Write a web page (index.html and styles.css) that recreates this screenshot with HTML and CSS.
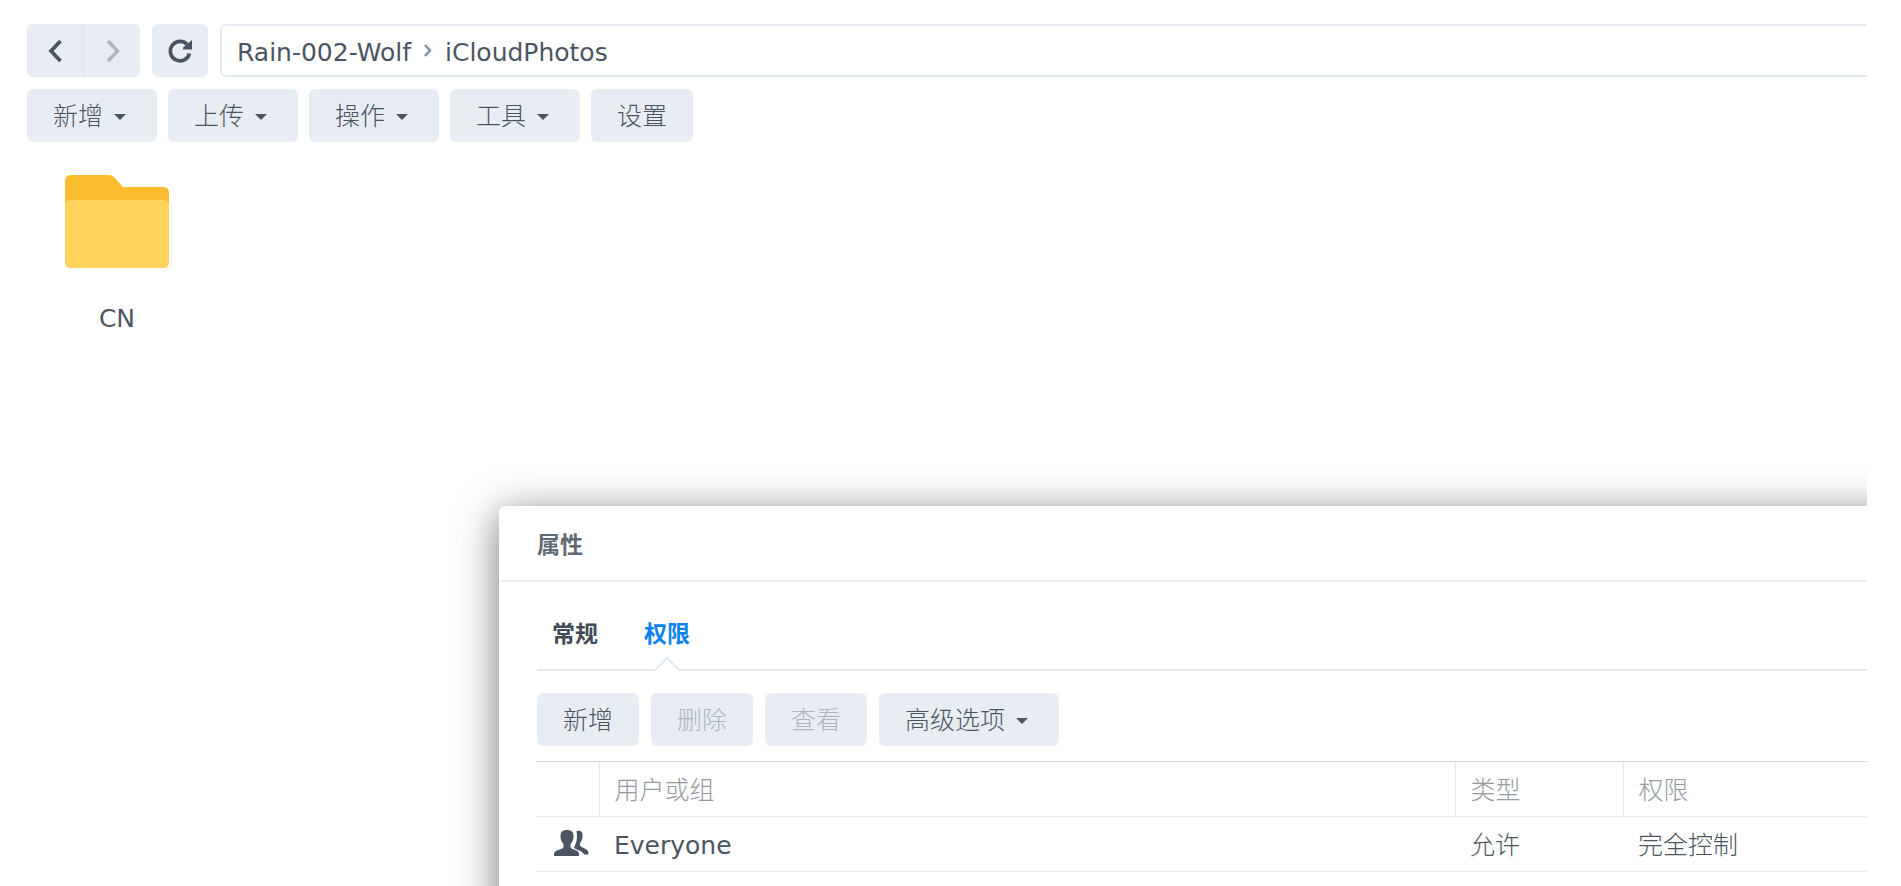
FILE: index.html
```html
<!DOCTYPE html>
<html lang="zh-CN">
<head>
<meta charset="utf-8">
<title>iCloudPhotos</title>
<link rel="stylesheet" href="styles.css">
</head>
<body>
<main class="station">
  <nav class="navbar" aria-label="导航">
    <div class="history">
      <button class="btn nav-btn" type="button" aria-label="后退">
        <svg width="24" height="26" viewBox="0 0 24 26"><path d="M17.500 3 8 13 17.500 23" fill="none" stroke="currentColor" stroke-width="3.800"/></svg>
      </button>
      <button class="btn nav-btn" type="button" aria-label="前进" disabled>
        <svg width="24" height="26" viewBox="0 0 24 26"><path d="M8 3 17.500 13 8 23" fill="none" stroke="currentColor" stroke-width="3.400"/></svg>
      </button>
    </div>
    <button class="btn nav-btn" type="button" aria-label="刷新">
      <svg width="24" height="24" viewBox="0 0 24 24"><path d="M21.500 14.500A9.700 9.700 0 1 1 19 5.300" fill="none" stroke="currentColor" stroke-width="3.700"/><path d="M24 1v9.500H15V8.500z" fill="currentColor"/></svg>
    </button>
    <div class="path">
      <a href="#">Rain-002-Wolf</a>
      <svg class="crumb" width="8" height="14" viewBox="0 0 8 14"><path d="M1 1l5 5.500L1 12" fill="none" stroke="currentColor" stroke-width="2.500"/></svg>
      <a href="#">iCloudPhotos</a>
    </div>
  </nav>

  <div class="toolbar">
    <button class="btn menu" type="button">新增</button>
    <button class="btn menu" type="button">上传</button>
    <button class="btn menu" type="button">操作</button>
    <button class="btn menu" type="button">工具</button>
    <button class="btn" type="button">设置</button>
  </div>

  <section class="files">
    <a class="file" href="#">
      <svg width="104" height="93" viewBox="0 0 104 93">
        <path d="M0 30V6Q0 0 6 0H44Q47 0 49 2L58 12H98Q104 12 104 18V30z" fill="#fcbc30"/>
        <path d="M0 31Q0 25 6 25H98Q104 25 104 31V87Q104 93 98 93H6Q0 93 0 87z" fill="#ffd25c"/>
      </svg>
      <span>CN</span>
    </a>
  </section>

  <section class="dialog" role="dialog" aria-labelledby="dialog-title">
    <h1 class="dialog-title" id="dialog-title">属性</h1>
    <div class="dialog-body">
      <div class="tabs" role="tablist">
        <button class="tab" type="button" role="tab">常规</button>
        <button class="tab active" type="button" role="tab" aria-selected="true">权限
          <svg class="notch" width="26" height="14" viewBox="0 0 26 14"><path d="M1 14V12.500L13 1 25 12.500V14z" fill="#fff"/><path d="M0 13H1L13 1 25 13H26" fill="none" stroke="#e1e9f0" stroke-width="2"/></svg>
        </button>
      </div>
      <div class="actions">
        <button class="btn" type="button">新增</button>
        <button class="btn" type="button" disabled>删除</button>
        <button class="btn" type="button" disabled>查看</button>
        <button class="btn menu" type="button">高级选项</button>
      </div>
      <table class="grid">
        <colgroup><col class="col-icon"><col><col class="col-type"><col class="col-perm"></colgroup>
        <thead>
          <tr><th></th><th>用户或组</th><th>类型</th><th>权限</th></tr>
        </thead>
        <tbody>
          <tr>
            <td class="who"><svg width="35" height="26" viewBox="0 0 35 26" fill="currentColor"><path d="M13 0C17.500 0 19.500 2 19.500 6 19.500 10 18.500 12 16.500 14V17C16.500 20 25 19 25 24V26H0V24C0 19 9.500 20 9.500 17V14C7.500 12 6.500 10 6.500 6 6.500 2 8.500 0 13 0z"/><path d="M22.500 1C27 0 29 2 28.500 6 28.500 9 27.500 11 26 13V15C26 18 34.500 18 34.500 23V24.500H30C28 20 22 20.500 20 17.500 23 12 23.500 8 22.500 1z"/></svg></td>
            <td class="latin">Everyone</td><td>允许</td><td>完全控制</td>
          </tr>
        </tbody>
      </table>
    </div>
  </section>
</main>
</body>
</html>
```
FILE: styles.css
```css
* { box-sizing: border-box; }

body {
  margin: 0;
  background: #fff;
  color: #4b5561;
  font: 300 25px/36px "DejaVu Sans", "Noto Sans CJK SC", sans-serif;
}

a { color: inherit; text-decoration: none; }
svg { display: block; }

.station {
  display: flex;
  flex-direction: column;
  height: 100vh;
  margin-right: 34px;
  padding-top: 24px;
  overflow: hidden;
}

.btn {
  height: 53px;
  padding: 2px 26px 0;
  border: 0;
  border-radius: 6px;
  background: #e8edf4;
  color: inherit;
  font: inherit;
}

.btn:disabled { color: #adb4bd; }

.menu {
  display: flex;
  align-items: center;
  gap: 11px;
  padding-right: 31px;
}

.menu::after {
  content: "";
  border: solid transparent;
  border-width: 6px 6px 0;
  border-top-color: currentColor;
}

.navbar {
  display: flex;
  gap: 12px;
  padding-left: 27px;
}

.history { display: flex; gap: 1px; background: #d9e3ec; border-radius: 6px; }
.history .btn:first-child { border-radius: 6px 0 0 6px; }
.history .btn:last-child { border-radius: 0 6px 6px 0; }

.btn.nav-btn {
  display: flex;
  align-items: center;
  justify-content: center;
  width: 56px;
  padding: 0;
}

.path {
  display: flex;
  flex: 1;
  align-items: center;
  gap: 13px;
  height: 53px;
  padding: 5px 0 0 15px;
  border: 2px solid #e5ebf1;
  border-right: 0;
  border-radius: 6px 0 0 6px;
  font-weight: 400;
}

.crumb { margin-bottom: 4px; color: #8593a2; }

.toolbar {
  display: flex;
  gap: 11px;
  padding: 12px 0 33px 27px;
}

.files {
  display: flex;
  padding-left: 27px;
  height: 331px;
}

.file {
  display: flex;
  flex-direction: column;
  align-items: center;
  gap: 33px;
  width: 180px;
  font-weight: 400;
}

.dialog {
  flex: 1;
  margin: 0 -100px -100px 499px;
  border-radius: 6px 0 0 0;
  background: #fff;
  box-shadow: 0 8px 42px rgba(0, 0, 0, 0.56);
}

.dialog-title {
  margin: 0;
  padding: 21px 38px 17px;
  border-bottom: 2px solid #e8eef5;
  color: #606a74;
  font-size: 23px;
  font-weight: 700;
  line-height: 36px;
}

.dialog-body { padding: 34px 100px 0 38px; }

.tabs {
  display: flex;
  gap: 16px;
  height: 55px;
  border-bottom: 2px solid #e1e9f0;
}

.tab {
  position: relative;
  height: 36px;
  padding: 0 15px;
  border: 0;
  background: none;
  color: #414b57;
  font: inherit;
  font-size: 23px;
  font-weight: 700;
}

.tab.active { color: #0a82f0; }

.notch {
  position: absolute;
  top: 41px;
  left: calc(50% - 13px);
}

.actions {
  display: flex;
  gap: 12px;
  padding: 22px 0 15px;
}

.grid {
  width: 100%;
  table-layout: fixed;
  border-collapse: collapse;
  border-top: 1px solid #cfdae4;
}

.col-icon { width: 62px; }
.col-type { width: 168px; }
.col-perm { width: 244px; }

.grid th,
.grid td {
  height: 55px;
  padding: 3px 15px 0;
  border-bottom: 1px solid #e3ebf2;
  font-weight: 300;
  text-align: left;
}

.grid th { color: #939aa1; }
.grid th + th { border-left: 1px solid #e3ebf2; }
.grid .who { padding: 0 0 2px 17px; }
.grid .latin { font-weight: 400; }
```
